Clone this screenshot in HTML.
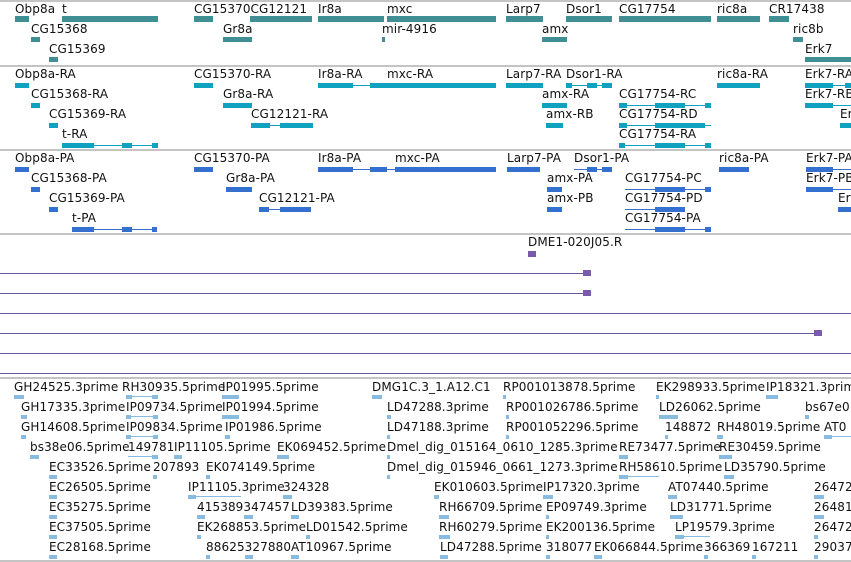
<!DOCTYPE html>
<html><head><meta charset="utf-8"><style>
*{margin:0;padding:0;box-sizing:border-box}
body{width:851px;height:562px;overflow:hidden;background:#fff;position:relative;font-family:"DejaVu Sans","Liberation Sans",sans-serif;font-size:12px;color:#111}
i{position:absolute;font-style:normal;line-height:14px;white-space:nowrap;letter-spacing:0.1px}
b{position:absolute;height:5px}
u{position:absolute;height:1px}
.t1 b{background:#3f8f94}.t2 b,.t2 u{background:#10a0c0}.t3 b,.t3 u{background:#3470d0}
.t5 b{background:#88bbe0;height:4px}.t5 u{background:#88bbe0}
.g{position:absolute;left:0;width:851px;height:2px;background:#c4c4c4}
.p{position:absolute;left:0;height:1px;background:#6a55a0}
.pa{position:absolute;height:6px;background:#7a5aaa}
</style></head><body>
<div class="g" style="top:0"></div>
<div class="t1">
<i style="left:15px;top:2px">Obp8a</i><b style="left:15px;top:16px;width:14px;height:6px"></b>
<i style="left:62px;top:2px">t</i><b style="left:62px;top:16px;width:96px;height:6px"></b>
<i style="left:31px;top:22px">CG15368</i><b style="left:31px;top:37px;width:9px"></b>
<i style="left:49px;top:42px">CG15369</i><b style="left:49px;top:57px;width:9px"></b>
<i style="left:194px;top:2px">CG15370CG12121</i><b style="left:194px;top:16px;width:19px;height:6px"></b><b style="left:250px;top:16px;width:62px;height:6px"></b>
<i style="left:223px;top:22px">Gr8a</i><b style="left:223px;top:37px;width:29px"></b>
<i style="left:318px;top:2px">Ir8a</i><b style="left:318px;top:16px;width:66px;height:6px"></b>
<i style="left:387px;top:2px">mxc</i><b style="left:387px;top:16px;width:109px;height:6px"></b>
<i style="left:382px;top:22px">mir-4916</i><b style="left:382px;top:37px;width:3px"></b>
<i style="left:506px;top:2px">Larp7</i><b style="left:506px;top:16px;width:37px;height:6px"></b>
<i style="left:566px;top:2px">Dsor1</i><b style="left:566px;top:16px;width:46px;height:6px"></b>
<i style="left:619px;top:2px">CG17754</i><b style="left:619px;top:16px;width:92px;height:6px"></b>
<i style="left:717px;top:2px">ric8a</i><b style="left:717px;top:16px;width:43px;height:6px"></b>
<i style="left:769px;top:2px">CR17438</i><b style="left:769px;top:16px;width:20px;height:6px"></b>
<i style="left:542px;top:22px">amx</i><b style="left:542px;top:37px;width:25px"></b>
<i style="left:793px;top:22px">ric8b</i><b style="left:793px;top:37px;width:10px"></b>
<i style="left:805px;top:42px">Erk7</i><b style="left:805px;top:57px;width:46px"></b>
</div>
<div class="g" style="top:65px"></div>
<div class="t2">
<i style="left:15px;top:67px">Obp8a-RA</i><b style="left:15px;top:83px;width:14px"></b>
<i style="left:31px;top:87px">CG15368-RA</i><b style="left:31px;top:103px;width:9px"></b>
<i style="left:49px;top:107px">CG15369-RA</i><b style="left:49px;top:123px;width:9px"></b>
<i style="left:62px;top:127px">t-RA</i><u style="left:62px;top:145px;width:96px"></u><b style="left:62px;top:143px;width:32px"></b><b style="left:122px;top:143px;width:10px"></b><b style="left:152px;top:143px;width:6px"></b>
<i style="left:194px;top:67px">CG15370-RA</i><b style="left:194px;top:83px;width:19px"></b>
<i style="left:223px;top:87px">Gr8a-RA</i><b style="left:223px;top:103px;width:29px"></b>
<i style="left:251px;top:107px">CG12121-RA</i><u style="left:251px;top:125px;width:62px"></u><b style="left:251px;top:123px;width:19px"></b><b style="left:280px;top:123px;width:33px"></b>
<i style="left:318px;top:67px">Ir8a-RA</i><u style="left:318px;top:85px;width:178px"></u><b style="left:318px;top:83px;width:35px"></b><b style="left:370px;top:83px;width:126px"></b>
<i style="left:387px;top:67px">mxc-RA</i>
<i style="left:506px;top:67px">Larp7-RA</i><b style="left:506px;top:83px;width:37px"></b>
<i style="left:566px;top:67px">Dsor1-RA</i><u style="left:566px;top:85px;width:46px"></u><b style="left:566px;top:83px;width:6px"></b><b style="left:587px;top:83px;width:10px"></b><b style="left:602px;top:83px;width:10px"></b>
<i style="left:542px;top:87px">amx-RA</i><b style="left:542px;top:103px;width:25px"></b>
<i style="left:546px;top:107px">amx-RB</i><b style="left:546px;top:123px;width:17px"></b>
<i style="left:619px;top:87px">CG17754-RC</i><u style="left:619px;top:105px;width:92px"></u><b style="left:619px;top:103px;width:8px"></b><b style="left:655px;top:103px;width:30px"></b><b style="left:705px;top:103px;width:6px"></b>
<i style="left:619px;top:107px">CG17754-RD</i><u style="left:619px;top:125px;width:92px"></u><b style="left:619px;top:123px;width:8px"></b><b style="left:655px;top:123px;width:50px"></b>
<i style="left:619px;top:127px">CG17754-RA</i><u style="left:619px;top:145px;width:92px"></u><b style="left:619px;top:143px;width:6px"></b><b style="left:655px;top:143px;width:30px"></b><b style="left:705px;top:143px;width:6px"></b>
<i style="left:717px;top:67px">ric8a-RA</i><b style="left:717px;top:83px;width:43px"></b>
<i style="left:805px;top:67px">Erk7-RA</i><u style="left:805px;top:85px;width:46px"></u><b style="left:805px;top:83px;width:28px"></b><b style="left:845px;top:83px;width:6px"></b>
<i style="left:805px;top:87px">Erk7-RB</i><b style="left:805px;top:103px;width:28px"></b><u style="left:805px;top:105px;width:46px"></u>
<i style="left:840px;top:107px">Er</i><b style="left:840px;top:123px;width:11px"></b>
</div>
<div class="g" style="top:149px"></div>
<div class="t3">
<i style="left:15px;top:151px">Obp8a-PA</i><b style="left:15px;top:167px;width:14px"></b>
<i style="left:31px;top:171px">CG15368-PA</i><b style="left:31px;top:187px;width:9px"></b>
<i style="left:49px;top:191px">CG15369-PA</i><b style="left:49px;top:207px;width:9px"></b>
<i style="left:72px;top:211px">t-PA</i><u style="left:72px;top:229px;width:85px"></u><b style="left:72px;top:227px;width:22px"></b><b style="left:122px;top:227px;width:10px"></b><b style="left:152px;top:227px;width:5px"></b>
<i style="left:194px;top:151px">CG15370-PA</i><b style="left:194px;top:167px;width:19px"></b>
<i style="left:226px;top:171px">Gr8a-PA</i><b style="left:226px;top:187px;width:26px"></b>
<i style="left:259px;top:191px">CG12121-PA</i><u style="left:259px;top:209px;width:52px"></u><b style="left:259px;top:207px;width:10px"></b><b style="left:280px;top:207px;width:31px"></b>
<i style="left:318px;top:151px">Ir8a-PA</i><u style="left:318px;top:169px;width:178px"></u><b style="left:318px;top:167px;width:35px"></b><b style="left:370px;top:167px;width:17px"></b><b style="left:395px;top:167px;width:101px"></b>
<i style="left:395px;top:151px">mxc-PA</i>
<i style="left:507px;top:151px">Larp7-PA</i><b style="left:507px;top:167px;width:7px"></b><b style="left:513px;top:167px;width:27px"></b>
<i style="left:574px;top:151px">Dsor1-PA</i><u style="left:574px;top:169px;width:38px"></u><b style="left:587px;top:167px;width:10px"></b><b style="left:602px;top:167px;width:10px"></b>
<i style="left:547px;top:171px">amx-PA</i><b style="left:547px;top:187px;width:15px"></b>
<i style="left:547px;top:191px">amx-PB</i><b style="left:547px;top:207px;width:15px"></b>
<i style="left:625px;top:171px">CG17754-PC</i><u style="left:625px;top:189px;width:86px"></u><b style="left:655px;top:187px;width:30px"></b><b style="left:705px;top:187px;width:6px"></b>
<i style="left:625px;top:191px">CG17754-PD</i><u style="left:625px;top:209px;width:60px"></u><b style="left:655px;top:207px;width:30px"></b>
<i style="left:625px;top:211px">CG17754-PA</i><u style="left:625px;top:229px;width:86px"></u><b style="left:655px;top:227px;width:30px"></b><b style="left:705px;top:227px;width:6px"></b>
<i style="left:719px;top:151px">ric8a-PA</i><b style="left:719px;top:167px;width:30px"></b>
<i style="left:806px;top:151px">Erk7-PA</i><u style="left:806px;top:169px;width:45px"></u><b style="left:806px;top:167px;width:27px"></b>
<i style="left:806px;top:171px">Erk7-PB</i><b style="left:806px;top:187px;width:27px"></b><u style="left:806px;top:189px;width:45px"></u>
<i style="left:838px;top:191px">Er</i><b style="left:838px;top:207px;width:13px"></b>
</div>
<div class="g" style="top:233px"></div>
<i style="left:528px;top:235px">DME1-020J05.R</i><div class="pa" style="left:528px;top:251px;width:8px"></div>
<div class="p" style="top:273px;width:588px"></div><div class="pa" style="left:583px;top:270px;width:8px"></div>
<div class="p" style="top:293px;width:588px"></div><div class="pa" style="left:583px;top:290px;width:8px"></div>
<div class="p" style="top:313px;width:851px"></div>
<div class="p" style="top:333px;width:820px"></div><div class="pa" style="left:814px;top:330px;width:8px"></div>
<div class="p" style="top:353px;width:851px"></div>
<div class="p" style="top:373px;width:851px"></div>
<div class="g" style="top:377px"></div>
<div class="t5">
<i style="left:14px;top:380px">GH24525.3prime</i><b style="left:14px;top:395px;width:10px"></b>
<i style="left:122px;top:380px">RH30935.5prime</i><u style="left:126px;top:396px;width:32px"></u><b style="left:126px;top:395px;width:6px"></b><b style="left:152px;top:395px;width:6px"></b>
<i style="left:222px;top:380px">IP01995.5prime</i><b style="left:222px;top:395px;width:17px"></b>
<i style="left:372px;top:380px">DMG1C.3_1.A12.C1</i><b style="left:372px;top:395px;width:10px"></b>
<i style="left:503px;top:380px">RP001013878.5prime</i><b style="left:503px;top:395px;width:3px"></b>
<i style="left:656px;top:380px">EK298933.5prime</i><b style="left:656px;top:395px;width:3px"></b>
<i style="left:766px;top:380px">IP18321.3prime</i><b style="left:766px;top:395px;width:12px"></b>
<i style="left:21px;top:400px">GH17335.3prime</i><b style="left:21px;top:415px;width:6px"></b>
<i style="left:126px;top:400px">IP09734.5prime</i><u style="left:126px;top:416px;width:32px"></u><b style="left:126px;top:415px;width:5px"></b><b style="left:153px;top:415px;width:5px"></b>
<i style="left:222px;top:400px">IP01994.5prime</i><b style="left:222px;top:415px;width:17px"></b>
<i style="left:387px;top:400px">LD47288.3prime</i><b style="left:387px;top:415px;width:4px"></b>
<i style="left:506px;top:400px">RP001026786.5prime</i><b style="left:506px;top:415px;width:3px"></b>
<i style="left:659px;top:400px">LD26062.5prime</i><b style="left:659px;top:415px;width:19px"></b>
<i style="left:805px;top:400px">bs67e0</i><b style="left:805px;top:415px;width:4px"></b>
<i style="left:21px;top:420px">GH14608.5prime</i><b style="left:21px;top:435px;width:5px"></b>
<i style="left:126px;top:420px">IP09834.5prime</i><u style="left:126px;top:436px;width:32px"></u><b style="left:126px;top:435px;width:5px"></b><b style="left:153px;top:435px;width:5px"></b>
<i style="left:225px;top:420px">IP01986.5prime</i><b style="left:225px;top:435px;width:5px"></b>
<i style="left:387px;top:420px">LD47188.3prime</i><b style="left:387px;top:435px;width:3px"></b>
<i style="left:506px;top:420px">RP001052296.5prime</i><b style="left:506px;top:435px;width:3px"></b>
<i style="left:665px;top:420px">148872</i><b style="left:665px;top:435px;width:3px"></b>
<i style="left:717px;top:420px">RH48019.5prime</i><b style="left:717px;top:435px;width:6px"></b>
<i style="left:824px;top:420px">AT0</i><u style="left:824px;top:436px;width:27px"></u><b style="left:824px;top:435px;width:8px"></b>
<i style="left:30px;top:440px">bs38e06.5prime</i><b style="left:30px;top:455px;width:9px"></b>
<i style="left:128px;top:440px">149781</i><u style="left:128px;top:456px;width:30px"></u><b style="left:152px;top:455px;width:6px"></b>
<i style="left:174px;top:440px">IP11105.5prime</i><b style="left:174px;top:455px;width:8px"></b>
<i style="left:277px;top:440px">EK069452.5prime</i><b style="left:277px;top:455px;width:12px"></b>
<i style="left:387px;top:440px">Dmel_dig_015164_0610_1285.3prime</i><b style="left:387px;top:455px;width:3px"></b>
<i style="left:619px;top:440px">RE73477.5prime</i><b style="left:619px;top:455px;width:9px"></b>
<i style="left:719px;top:440px">RE30459.5prime</i><b style="left:719px;top:455px;width:13px"></b>
<i style="left:49px;top:460px">EC33526.5prime</i><b style="left:49px;top:475px;width:8px"></b>
<i style="left:153px;top:460px">207893</i><b style="left:153px;top:475px;width:4px"></b>
<i style="left:206px;top:460px">EK074149.5prime</i><b style="left:206px;top:475px;width:4px"></b>
<i style="left:387px;top:460px">Dmel_dig_015946_0661_1273.3prime</i><b style="left:387px;top:475px;width:3px"></b>
<i style="left:619px;top:460px">RH58610.5prime</i><u style="left:619px;top:476px;width:40px"></u><b style="left:619px;top:475px;width:9px"></b>
<i style="left:724px;top:460px">LD35790.5prime</i><b style="left:724px;top:475px;width:10px"></b>
<i style="left:49px;top:480px">EC26505.5prime</i><b style="left:49px;top:495px;width:8px"></b>
<i style="left:188px;top:480px">IP11105.3prime</i><u style="left:188px;top:496px;width:53px"></u><b style="left:188px;top:495px;width:8px"></b>
<i style="left:283px;top:480px">324328</i><b style="left:283px;top:495px;width:9px"></b>
<i style="left:434px;top:480px">EK010603.5prime</i><b style="left:434px;top:495px;width:5px"></b>
<i style="left:543px;top:480px">IP17320.3prime</i><b style="left:543px;top:495px;width:10px"></b>
<i style="left:668px;top:480px">AT07440.5prime</i><b style="left:668px;top:495px;width:9px"></b>
<i style="left:814px;top:480px">26472</i><b style="left:814px;top:495px;width:10px"></b>
<i style="left:49px;top:500px">EC35275.5prime</i><b style="left:49px;top:515px;width:8px"></b>
<i style="left:197px;top:500px">415389347457</i><b style="left:197px;top:515px;width:8px"></b><b style="left:244px;top:515px;width:9px"></b>
<i style="left:291px;top:500px">LD39383.5prime</i><b style="left:291px;top:515px;width:8px"></b>
<i style="left:439px;top:500px">RH66709.5prime</i><b style="left:439px;top:515px;width:10px"></b>
<i style="left:546px;top:500px">EP09749.3prime</i><b style="left:546px;top:515px;width:3px"></b>
<i style="left:670px;top:500px">LD31771.5prime</i><b style="left:670px;top:515px;width:13px"></b>
<i style="left:814px;top:500px">26481</i><b style="left:814px;top:515px;width:10px"></b>
<i style="left:49px;top:520px">EC37505.5prime</i><b style="left:49px;top:535px;width:8px"></b>
<i style="left:197px;top:520px">EK268853.5prime</i><b style="left:197px;top:535px;width:4px"></b>
<i style="left:306px;top:520px">LD01542.5prime</i><b style="left:306px;top:535px;width:4px"></b>
<i style="left:439px;top:520px">RH60279.5prime</i><b style="left:439px;top:535px;width:11px"></b>
<i style="left:546px;top:520px">EK200136.5prime</i><b style="left:546px;top:535px;width:3px"></b>
<i style="left:675px;top:520px">LP19579.3prime</i><u style="left:675px;top:536px;width:35px"></u><b style="left:675px;top:535px;width:9px"></b>
<i style="left:814px;top:520px">26472</i><b style="left:814px;top:535px;width:4px"></b>
<i style="left:49px;top:540px">EC28168.5prime</i><b style="left:49px;top:555px;width:8px"></b>
<i style="left:206px;top:540px">88625327880</i><b style="left:206px;top:555px;width:4px"></b><b style="left:245px;top:555px;width:8px"></b>
<i style="left:291px;top:540px">AT10967.5prime</i><b style="left:291px;top:555px;width:8px"></b>
<i style="left:440px;top:540px">LD47288.5prime</i><b style="left:440px;top:555px;width:8px"></b>
<i style="left:546px;top:540px">318077</i><b style="left:546px;top:555px;width:4px"></b>
<i style="left:594px;top:540px">EK066844.5prime</i><b style="left:594px;top:555px;width:8px"></b>
<i style="left:704px;top:540px">366369</i><b style="left:704px;top:555px;width:4px"></b>
<i style="left:752px;top:540px">167211</i><b style="left:752px;top:555px;width:4px"></b>
<i style="left:814px;top:540px">29037</i><b style="left:814px;top:555px;width:4px"></b>
</div>
<div class="g" style="top:560px"></div>
</body></html>
